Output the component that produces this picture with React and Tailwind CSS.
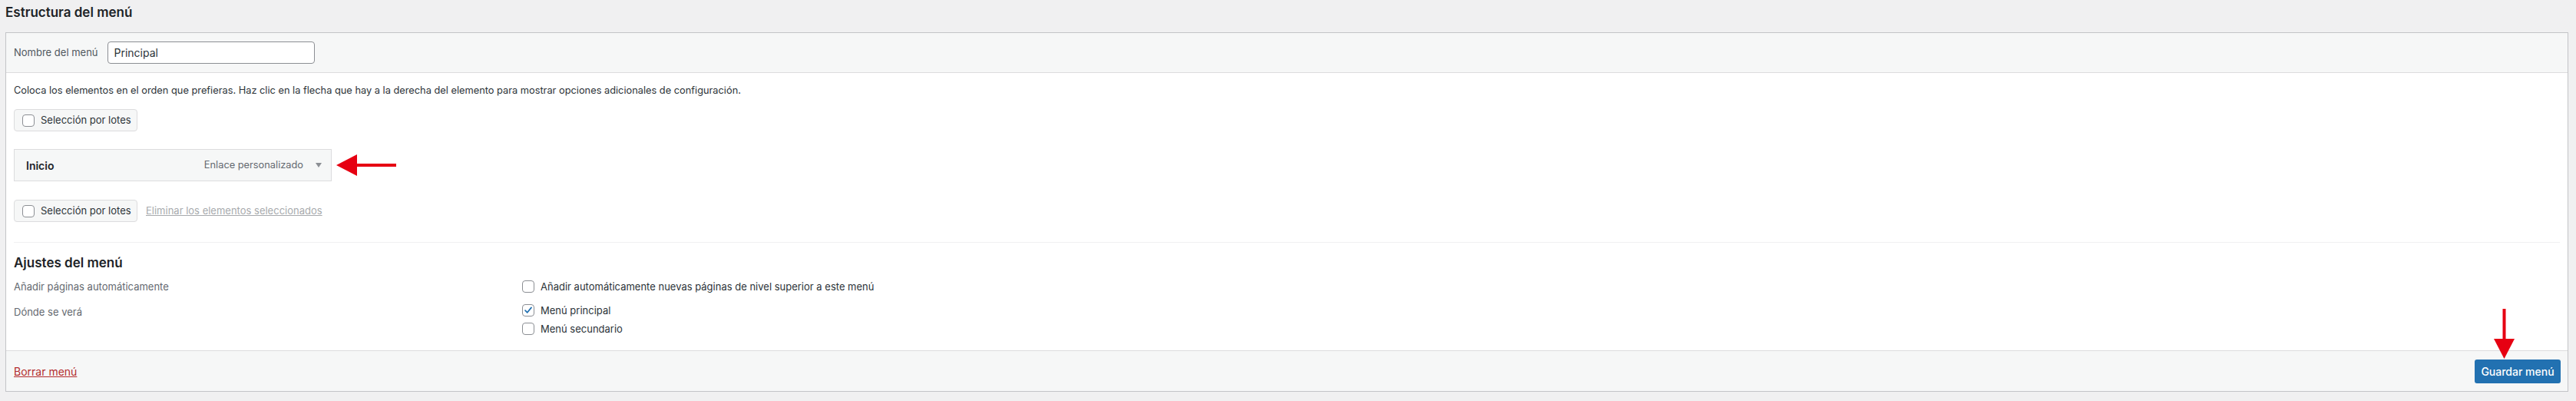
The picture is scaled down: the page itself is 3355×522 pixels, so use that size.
import { useState } from 'react';

function Checkbox({ checked }) {
  return (
    <span className="flex h-4 w-4 shrink-0 items-center justify-center rounded-[4px] border border-[#8c8f94] bg-white">
      {checked && (
        <svg viewBox="0 0 16 16" className="h-[14px] w-[14px]">
          <path d="M3.5 8.2 L6.6 11.2 L12.6 3.8" fill="none" stroke="#2271b1" strokeWidth="2" strokeLinecap="round" strokeLinejoin="round" />
        </svg>
      )}
    </span>
  );
}

function BulkButton() {
  return (
    <div className="flex h-[29px] w-[161px] items-center gap-2 rounded-[4px] border border-[#dcdcde] bg-[#f6f7f7] pl-[10px] text-[13px] text-[#2c3338]">
      <Checkbox />
      <span>Selección por lotes</span>
    </div>
  );
}

function LeftArrow() {
  return (
    <svg width="78" height="28" viewBox="0 0 78 28" className="ml-[6px]">
      <rect x="26" y="12" width="52" height="4" fill="#e60012" />
      <polygon points="0,14 27,0 27,28" fill="#e60012" />
    </svg>
  );
}

function DownArrow() {
  return (
    <svg width="27" height="65" viewBox="0 0 27 65" className="absolute bottom-[32px] left-[25px]">
      <rect x="11.5" y="0" width="4" height="40" fill="#e60012" />
      <polygon points="0,39 27,39 13.5,65" fill="#e60012" />
    </svg>
  );
}

export default function App() {
  const [menuName, setMenuName] = useState('Principal');

  return (
    <div className="h-[522px] w-full overflow-hidden bg-[#f0f0f1] font-['Inter',sans-serif] text-[13px] text-[#3c434a]">
      <h2 className="px-[7px] pt-[5px] text-[17px] font-semibold leading-[22px] text-[#1d2327]">
        Estructura del menú
      </h2>

      <div className="ml-[7px] mr-[10px] mt-[15px] border border-[#c3c4c7] bg-white">
        {/* header */}
        <div className="flex h-[52px] items-center gap-[12px] border-b border-[#dcdcde] bg-[#f6f7f7] pl-[10px]">
          <label className="text-[13px] text-[#50575e]">Nombre del menú</label>
          <input
            value={menuName}
            onChange={(e) => setMenuName(e.target.value)}
            className="h-[29px] w-[270px] rounded-[4px] border border-[#8c8f94] bg-white px-2 text-[14px] text-[#2c3338] outline-none"
          />
        </div>

        {/* body */}
        <div className="px-[10px] pb-[18px]">
          <p className="pt-[13px] text-[12.8px] leading-[20px] text-[#2c3338]">
            Coloca los elementos en el orden que prefieras. Haz clic en la flecha que hay a la derecha del elemento para mostrar opciones adicionales de configuración.
          </p>

          <div className="mt-[14px]">
            <BulkButton />
          </div>

          <div className="mt-[23px] flex items-center">
            <div className="flex h-[42px] w-[414px] items-center justify-between border border-[#dcdcde] bg-[#f6f7f7] pl-[15px] pr-[12px]">
              <span className="text-[14px] font-semibold text-[#1d2327]">Inicio</span>
              <span className="flex items-center gap-[16px] text-[12.8px] text-[#646970]">
                Enlace personalizado
                <svg width="8" height="6" viewBox="0 0 8 6">
                  <polygon points="0,0 8,0 4,6" fill="#8c8f94" />
                </svg>
              </span>
            </div>
            <LeftArrow />
          </div>

          <div className="mt-[24px] flex items-center gap-[11px]">
            <BulkButton />
            <a href="#" className="text-[#a7aaad] underline">Eliminar los elementos seleccionados</a>
          </div>

          <div className="mt-[26px] border-t border-[#f0f0f1]" />

          <h3 className="mt-[15px] text-[17px] font-semibold leading-[22px] text-[#1d2327]">Ajustes del menú</h3>

          <div className="mt-[10px] flex leading-[20px]">
            <div className="w-[662px] text-[#646970]">Añadir páginas automáticamente</div>
            <label className="flex items-center gap-2 text-[#2c3338]">
              <Checkbox />
              Añadir automáticamente nuevas páginas de nivel superior a este menú
            </label>
          </div>

          <div className="mt-[11px] flex leading-[20px]">
            <div className="w-[662px] pt-[2px] text-[#646970]">Dónde se verá</div>
            <div className="flex flex-col gap-[4px]">
              <label className="flex items-center gap-2 text-[#2c3338]">
                <Checkbox checked />
                Menú principal
              </label>
              <label className="flex items-center gap-2 text-[#2c3338]">
                <Checkbox />
                Menú secundario
              </label>
            </div>
          </div>
        </div>

        {/* footer */}
        <div className="flex h-[53px] items-center justify-between border-t border-[#dcdcde] bg-[#f6f7f7] pl-[10px] pr-[9px]">
          <a href="#" className="text-[14px] text-[#b32d2e] underline">Borrar menú</a>
          <div className="relative">
            <DownArrow />
            <button className="h-[31px] w-[112px] rounded-[3px] bg-[#2271b1] text-[14px] font-medium text-white">
              Guardar menú
            </button>
          </div>
        </div>
      </div>
    </div>
  );
}
